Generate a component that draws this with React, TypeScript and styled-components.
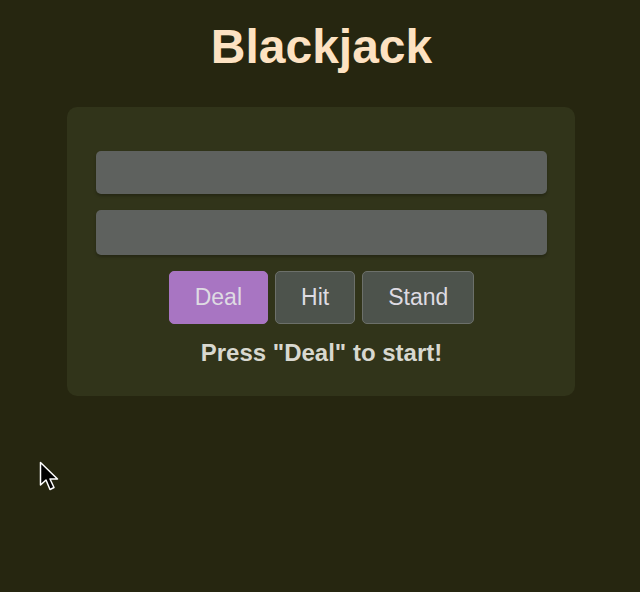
import styled, { createGlobalStyle } from "styled-components";

const GlobalStyle = createGlobalStyle`
  html, body {
    margin: 0;
    padding: 0;
    background: #262610;
  }
  body {
    font-family: "Liberation Sans", Arial, sans-serif;
    min-height: 100vh;
  }
`;

const Page = styled.div`
  display: flex;
  flex-direction: column;
  align-items: center;
  padding-top: 19px;
  height: 592px;
  box-sizing: border-box;
  position: relative;
`;

const Title = styled.h1`
  margin: 0 0 33px 3px;
  font-size: 48px;
  font-weight: bold;
  color: #fde2c2;
  line-height: 55px;
`;

const Table = styled.div`
  width: 508px;
  box-sizing: border-box;
  padding: 44px 28px 30px 29px;
  margin-left: 2px;
  background: #31341a;
  border-radius: 10px;
  display: flex;
  flex-direction: column;
  align-items: center;
`;

const Hand = styled.div<{ $h: number }>`
  width: 451px;
  height: ${(p) => p.$h}px;
  background: #5e615e;
  border-radius: 5px;
  margin-bottom: 16px;
  box-shadow: 0 2px 3px rgba(0, 0, 0, 0.25);
`;

const Controls = styled.div`
  display: flex;
  gap: 7px;
  margin-bottom: 16px;
`;

const Button = styled.button<{ $primary?: boolean }>`
  font-family: "Liberation Sans", Arial, sans-serif;
  font-size: 23px;
  line-height: 25px;
  padding: 13px 25px;
  border-radius: 5px;
  cursor: pointer;
  color: #dedbe2;
  background: ${(p) => (p.$primary ? "#a875c2" : "#4d534c")};
  border: 1px solid ${(p) => (p.$primary ? "#a875c2" : "#6c706a")};
`;

const Status = styled.p`
  margin: 0;
  font-size: 24px;
  font-weight: bold;
  line-height: 26px;
  color: #d8d8d0;
`;

const Cursor = styled.svg`
  position: absolute;
  left: 39px;
  top: 461px;
`;

const App = () => {
  return (
    <Page>
      <GlobalStyle />
      <Title>Blackjack</Title>
      <Table>
        <Hand $h={43} />
        <Hand $h={45} />
        <Controls>
          <Button $primary>Deal</Button>
          <Button>Hit</Button>
          <Button>Stand</Button>
        </Controls>
        <Status>Press "Deal" to start!</Status>
      </Table>
      <Cursor width="24" height="34" viewBox="0 0 24 34">
        <path
          d="M1.5 1.5 L1.5 24 L7 19 L11 28.5 L15 26.5 L11 18 L18.5 18 Z"
          fill="#000"
          stroke="#fff"
          strokeWidth="1.5"
          strokeLinejoin="round"
        />
      </Cursor>
    </Page>
  );
};

export default App;
